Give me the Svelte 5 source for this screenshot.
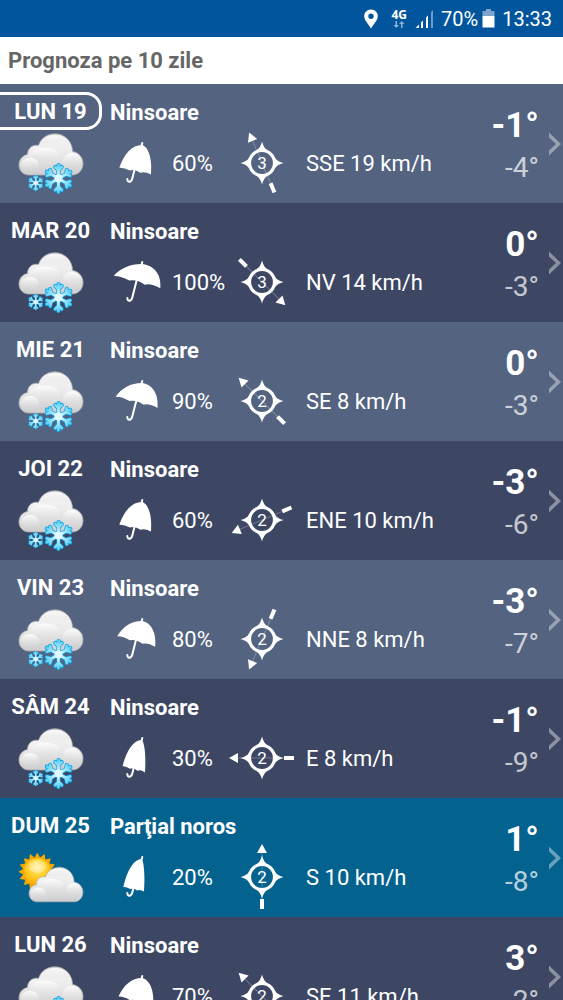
<script lang="ts">
  type Canopy = { left: number[]; right: number[] };

  const days = [
    { date: "LUN 19", sky: "Ninsoare", icon: "snow", rain: 60, dir: "SSE", angle: -23, speed: 19, force: 3, high: -1, low: -4, tone: "light", today: true },
    { date: "MAR 20", sky: "Ninsoare", icon: "snow", rain: 100, dir: "NV", angle: 135, speed: 14, force: 3, high: 0, low: -3, tone: "dark" },
    { date: "MIE 21", sky: "Ninsoare", icon: "snow", rain: 90, dir: "SE", angle: -45, speed: 8, force: 2, high: 0, low: -3, tone: "light" },
    { date: "JOI 22", sky: "Ninsoare", icon: "snow", rain: 60, dir: "ENE", angle: 247, speed: 10, force: 2, high: -3, low: -6, tone: "dark" },
    { date: "VIN 23", sky: "Ninsoare", icon: "snow", rain: 80, dir: "NNE", angle: 203, speed: 8, force: 2, high: -3, low: -7, tone: "light" },
    { date: "SÂM 24", sky: "Ninsoare", icon: "snow", rain: 30, dir: "E", angle: 270, speed: 8, force: 2, high: -1, low: -9, tone: "dark" },
    { date: "DUM 25", sky: "Parţial noros", icon: "sun", rain: 20, dir: "S", angle: 0, speed: 10, force: 2, high: 1, low: -8, tone: "blue" },
    { date: "LUN 26", sky: "Ninsoare", icon: "snow", rain: 70, dir: "SE", angle: -45, speed: 11, force: 2, high: 3, low: -2, tone: "dark" },
  ];

  // the umbrella opens as the chance of rain grows
  const canopies: Record<number, Canopy> = {
    20: { left: [13.3, 32], right: [34, 36.5] },
    30: { left: [12.5, 30.2], right: [35, 36.4] },
    60: { left: [9.3, 26.7], right: [41, 33.5] },
    70: { left: [8.5, 22.5], right: [43.2, 32] },
    80: { left: [7.2, 19.3], right: [45.2, 29.8] },
    90: { left: [5.6, 17.7], right: [47.5, 29] },
    100: { left: [3.7, 16], right: [50.3, 28.3] },
  };

  function canopy(rain: number) {
    const { left: [lx, ly], right: [rx, ry] } = canopies[rain];
    const ax = 31.7;
    const ay = 4;
    const dx = ax - lx;
    const dy = ly - ay;
    const sx = (rx - lx) / 3;
    const sy = (ry - ly) / 3;
    return [
      `M${lx} ${ly}`,
      `C${lx + 0.22 * dx} ${ly - 0.62 * dy} ${lx + 0.58 * dx} ${ay} ${ax} ${ay}`,
      `C${ax + 0.65 * (rx - ax)} ${ay + 1} ${rx + 1.5} ${ay + 0.42 * (ry - ay)} ${rx} ${ry}`,
      `q${-sx * 0.6} ${-sy - 1} ${-sx} ${-sy + 0.5}`,
      `q${-sx * 0.5} ${-sy - 1.5} ${-sx} ${-sy}`,
      `q${-sx * 0.6} ${-sy - 1} ${-sx} ${-sy - 0.5}Z`,
    ].join("");
  }

  function sunRays() {
    const points: string[] = [];
    for (let i = 0; i < 32; i++) {
      const r = i % 2 ? 14.5 : 19;
      const a = (i * Math.PI) / 16;
      points.push(`${(r * Math.sin(a)).toFixed(1)},${(-r * Math.cos(a)).toFixed(1)}`);
    }
    return points.join(" ");
  }
</script>

<svg class="defs" aria-hidden="true">
  <defs>
    <linearGradient id="cloud-fill" x1="0" y1="0" x2="0" y2="1">
      <stop offset="0" stop-color="#d6d6d6" />
      <stop offset="0.3" stop-color="#f4f4f4" />
      <stop offset="1" stop-color="#cdcdcf" />
    </linearGradient>
    <linearGradient id="puff-fill" x1="0" y1="0" x2="0" y2="1">
      <stop offset="0" stop-color="#fff" stop-opacity="0.9" />
      <stop offset="0.7" stop-color="#e4e4e5" stop-opacity="0.3" />
      <stop offset="1" stop-color="#ddd" stop-opacity="0" />
    </linearGradient>
    <radialGradient id="sun-fill" cx="0.5" cy="0.35" r="0.65">
      <stop offset="0" stop-color="#fff0a0" />
      <stop offset="0.5" stop-color="#ffd02a" />
      <stop offset="1" stop-color="#f9a800" />
    </radialGradient>
    <radialGradient id="ice-fill" gradientUnits="userSpaceOnUse" cx="0" cy="0" r="15">
      <stop offset="0" stop-color="#f2fdff" />
      <stop offset="0.45" stop-color="#a5e8fb" />
      <stop offset="1" stop-color="#4fcbf5" />
    </radialGradient>
    <symbol id="cloud" viewBox="0 0 66 44" overflow="visible">
      <path
        d="M11 42C5 42 1 37.500 1 32C1 26.500 4.500 22.500 9.500 21.500C9.500 15 15 11 20.500 12.500C23 5 29.500 0.800 37 0.800C46.500 0.800 54.500 8.500 54.500 18.500C61 19.500 65 24.500 65 30.500C65 37.500 60 42 54 42Z"
        fill="url(#cloud-fill)"
        stroke="#aeb0b4"
        stroke-width="0.8"
      />
      <ellipse cx="37" cy="12" rx="15" ry="10" fill="url(#puff-fill)" />
      <ellipse cx="27" cy="23" rx="15" ry="8.500" fill="url(#puff-fill)" />
      <ellipse cx="54" cy="28" rx="9" ry="8" fill="url(#puff-fill)" />
      <ellipse cx="12" cy="32" rx="9" ry="7" fill="url(#puff-fill)" />
    </symbol>
    <symbol id="flake" viewBox="-16 -16 32 32">
      <g fill="none" stroke="#0d9fe0" stroke-width="4.200" stroke-linecap="round">
        {#each [0, 60, 120, 180, 240, 300] as turn}
          <path d="M0 0.100L0.100 -13.500M-3.200 -11.500L0 -8.500L3.200 -11.500" transform="rotate({turn})" />
        {/each}
      </g>
      <g fill="none" stroke="url(#ice-fill)" stroke-width="2.800" stroke-linecap="round">
        {#each [0, 60, 120, 180, 240, 300] as turn}
          <path d="M0 0.100L0.100 -13.500M-3.200 -11.500L0 -8.500L3.200 -11.500" transform="rotate({turn})" />
        {/each}
      </g>
      <circle r="4" fill="#dff8ff" />
    </symbol>
  </defs>
</svg>

<div class="screen">
  <div class="status">
    <svg class="pin" viewBox="0 0 14 20" aria-hidden="true">
      <path
        fill="#fff"
        fill-rule="evenodd"
        d="M7 0.500C3 0.500 0.200 3.500 0.200 7.200C0.200 11.500 4.500 15 7 19.500C9.500 15 13.800 11.500 13.800 7.200C13.800 3.500 11 0.500 7 0.500ZM7 4.500a2.700 2.700 0 1 1 0 5.400a2.700 2.700 0 1 1 0 -5.400Z"
      />
    </svg>
    <span class="network">
      4G
      <svg viewBox="0 0 12 7" aria-hidden="true">
        <path fill="#8db2d5" d="M2.500 0h1.500v4h2l-2.700 3l-2.800 -3h2ZM8 7h1.500v-4h2l-2.700 -3l-2.800 3h2Z" />
      </svg>
    </span>
    <svg class="signal" viewBox="0 0 20 20" aria-hidden="true">
      <path fill="#fff" d="M0.500 19L4 15.500V19ZM6 13.500l2 -2V19h-2ZM11 8.500l2 -2V19h-2Z" />
      <path fill="#6f9dc8" d="M16 3l2 -2V19h-2Z" />
    </svg>
    <span>70%</span>
    <svg class="battery" viewBox="0 0 13 19" aria-hidden="true">
      <path fill="#7ba5cd" d="M4 0h5v2h3.500v5h-12v-5h3.500Z" />
      <path fill="#fff" d="M0.500 7h12v11.500h-12Z" />
    </svg>
    <time>13:33</time>
  </div>

  <h1>Prognoza pe 10 zile</h1>

  <ul class="days">
    {#each days as day}
      <li>
        <a class="day {day.tone}" href="#details">
          <div class="when">
            <span class="date" class:today={day.today}>{day.date}</span>
            <svg class="weather" viewBox="0 0 66 62" aria-hidden="true">
              {#if day.icon === "sun"}
                <g transform="translate(19.300 24.700)">
                  <polygon points={sunRays()} fill="#f7a900" />
                  <circle r="14" fill="url(#sun-fill)" stroke="#f0a000" stroke-width="0.8" />
                  <ellipse cy="-5" rx="9" ry="6" fill="#fff" opacity="0.3" />
                </g>
                <use href="#cloud" x="10" y="19.500" width="56" height="37" />
              {:else}
                <use href="#cloud" x="0" y="0" width="66" height="44" />
                <use href="#flake" x="24.500" y="29.500" width="32" height="32" />
                <use href="#flake" x="9.200" y="41.500" width="17" height="17" />
              {/if}
            </svg>
          </div>

          <div class="info">
            <strong class="sky">{day.sky}</strong>
            <div class="metrics">
              <svg class="umbrella" viewBox="0 0 54 44" aria-hidden="true">
                <path d={canopy(day.rain)} fill="#fff" />
                <path
                  d="M31.500 5L32.300 2M27.500 17L22.300 37.500C21.300 41.500 17.300 42 17.300 38"
                  fill="none"
                  stroke="#fff"
                  stroke-width="2"
                  stroke-linecap="round"
                />
              </svg>
              <span class="rain">{day.rain}%</span>
              <svg class="compass" viewBox="-36 -36 72 72" aria-hidden="true">
                <g transform="rotate({day.angle})" fill="#fff">
                  <path d="M0 -25V22" stroke="#fff" stroke-opacity="0.25" />
                  <path d="M0 -33L5 -24H-5Z" />
                  <rect x="-2" y="22" width="4" height="10" />
                </g>
                <circle r="12.500" fill="none" stroke="#fff" stroke-width="3.200" />
                {#each [0, 90, 180, 270] as turn}
                  <path d="M0 -21.500Q1.500 -15.500 5 -13H-5Q-1.500 -15.500 0 -21.500Z" fill="#fff" transform="rotate({turn})" />
                {/each}
                <text y="6" text-anchor="middle" fill="#fff">{day.force}</text>
              </svg>
              <span class="wind">{day.dir} {day.speed} km/h</span>
            </div>
          </div>

          <div class="temps">
            <span class="high">{day.high}°</span>
            <span class="low">{day.low}°</span>
          </div>

          <svg class="chevron" viewBox="0 0 12 24" aria-hidden="true">
            <path d="M0 0.500L12 12L0 23.500V18.500L7 12L0 5.500Z" fill="#fff" />
          </svg>
        </a>
      </li>
    {/each}
  </ul>
</div>

<style>
  :global(body) {
    margin: 0;
    background: #3d4764;
  }

  .defs {
    position: absolute;
    width: 0;
    height: 0;
  }

  .screen {
    display: flex;
    flex-direction: column;
    height: 100vh;
    font-family: Roboto, "Liberation Sans", sans-serif;
    font-size: 22px;
    color: #fff;
  }

  .status {
    display: flex;
    flex: none;
    align-items: center;
    justify-content: flex-end;
    height: 37px;
    padding-right: 11px;
    background: #01559d;
    font-size: 20px;
  }

  .pin {
    width: 14px;
    height: 20px;
    margin-right: 13px;
  }

  .network {
    display: flex;
    flex-direction: column;
    align-items: center;
    margin-right: 8px;
    font: bold 12px/10px "Open Sans", sans-serif;
  }

  .network svg {
    width: 12px;
    height: 7px;
    margin-top: 1px;
  }

  .signal {
    width: 20px;
    height: 20px;
    margin-right: 6px;
  }

  .battery {
    width: 13px;
    height: 19px;
    margin: 0 7px 0 4px;
  }

  h1 {
    flex: none;
    margin: 0;
    padding: 0 8px;
    background: #fff;
    color: #666;
    font-size: 22px;
    line-height: 47px;
  }

  .days {
    flex: 1;
    min-height: 0;
    margin: 0;
    padding: 0;
    list-style: none;
    overflow-y: auto;
    scrollbar-width: none;
  }

  .day {
    display: grid;
    grid-template-columns: 102px 1fr auto 12px;
    height: 119px;
    padding-right: 2px;
    color: inherit;
    text-decoration: none;
    white-space: nowrap;
    overflow: hidden;
  }

  .light {
    background: #536380;
  }

  .dark {
    background: #3d4764;
  }

  .blue {
    background: #04628f;
  }

  .when {
    padding-top: 8px;
  }

  .date {
    display: block;
    box-sizing: border-box;
    height: 38px;
    padding-left: 2px;
    border: 3px solid transparent;
    border-left: 0;
    border-radius: 0 16px 16px 0;
    font-weight: bold;
    line-height: 34px;
    text-align: center;
  }

  .today {
    border-color: #fff;
  }

  .weather {
    display: block;
    width: 66px;
    height: 62px;
    margin: 3px 0 0 18px;
  }

  .info {
    padding: 16px 0 0 8px;
  }

  .sky {
    display: block;
    line-height: 26px;
  }

  .metrics {
    display: grid;
    grid-template-columns: 54px 46px 72px auto;
    justify-content: start;
    align-items: center;
    column-gap: 8px;
    margin-top: 1px;
  }

  .umbrella {
    width: 54px;
    height: 44px;
  }

  .compass {
    width: 72px;
    height: 72px;
  }

  .compass text {
    font-size: 17px;
  }

  .temps {
    display: flex;
    flex-direction: column;
    gap: 2px;
    padding: 22px 10px 0 0;
    text-align: right;
    line-height: 40px;
  }

  .high {
    font-size: 35px;
    font-weight: bold;
  }

  .low {
    font-size: 28px;
    opacity: 0.7;
  }

  .chevron {
    align-self: center;
    width: 12px;
    height: 24px;
    opacity: 0.4;
  }
</style>
